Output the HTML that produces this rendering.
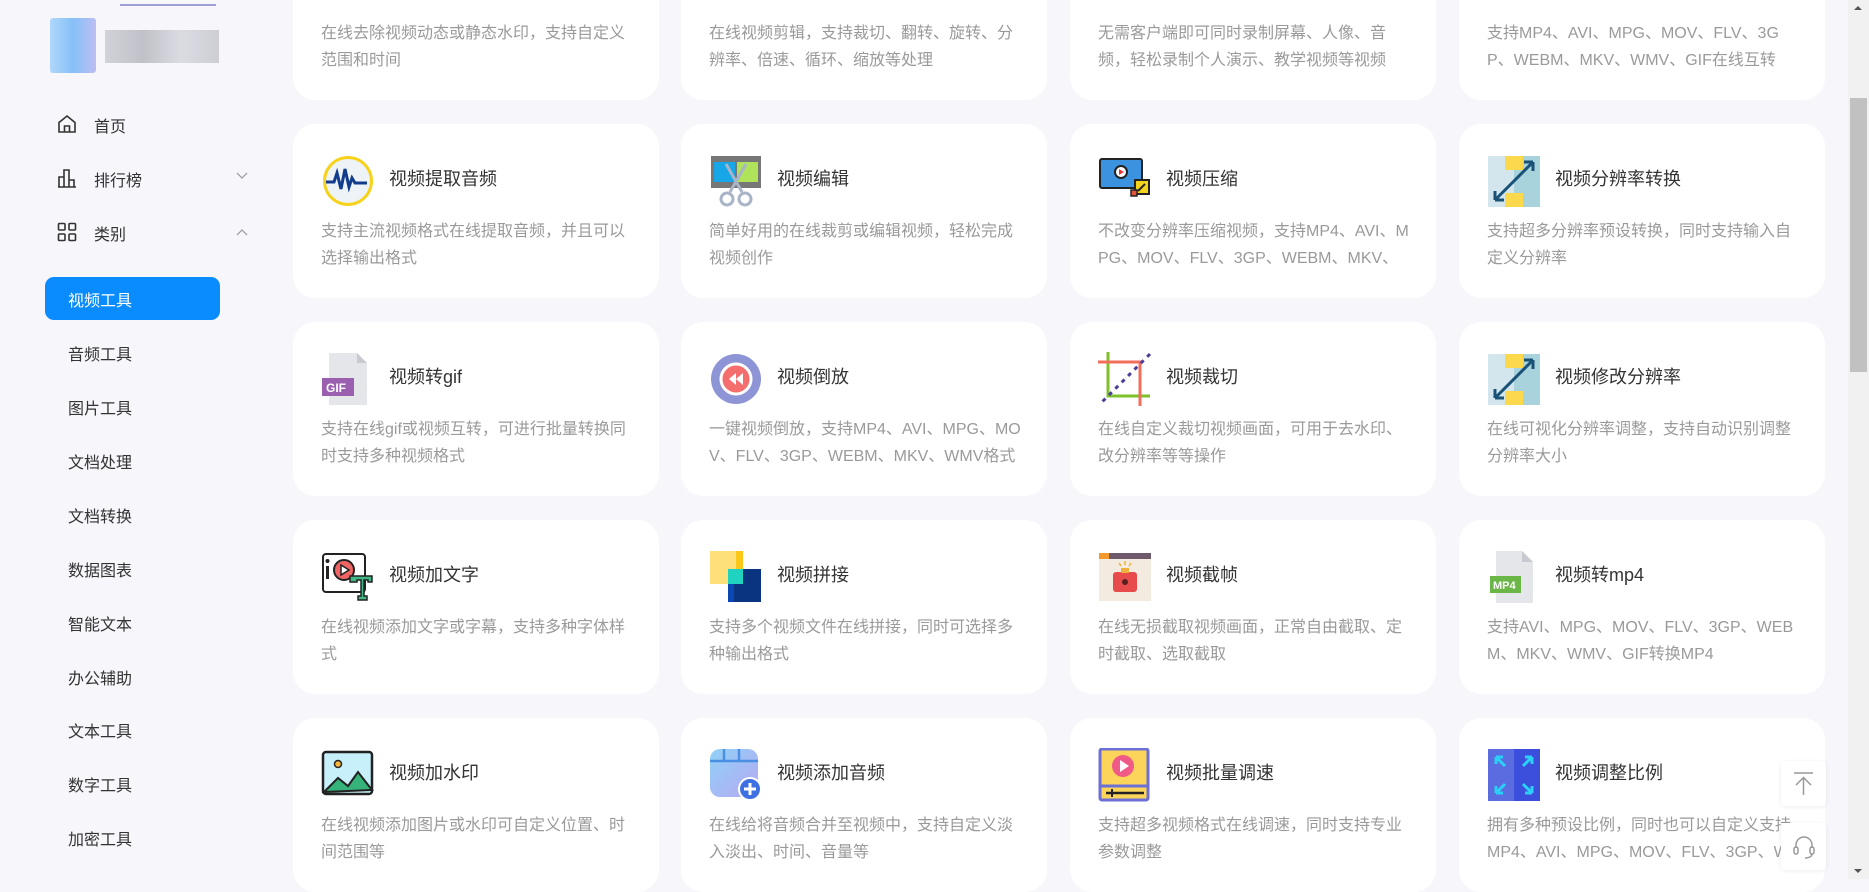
<!DOCTYPE html>
<html><head><meta charset="utf-8"><style>
*{margin:0;padding:0;box-sizing:border-box}
body{width:1869px;height:879px;overflow:hidden;background:#f6f6fb;font-family:"Liberation Sans","Noto Sans CJK SC",sans-serif;position:relative}
.card{position:absolute;width:366px;height:174px;background:#fff;border-radius:22px}
.card .ic{position:absolute;left:28px;top:30px;width:54px;height:54px}
.card .t{position:absolute;left:96px;top:41px;font-size:18px;color:#333;white-space:nowrap}
.card .d{position:absolute;left:28px;top:94px;font-size:16px;line-height:27px;color:#9a9a9a;white-space:nowrap}
.nav{position:absolute;font-size:16px;color:#333;white-space:nowrap}
.sub{position:absolute;left:68px;font-size:16px;color:#333}
</style></head><body>
<!-- logo -->
<div style="position:absolute;left:120px;top:4px;width:96px;height:2px;background:#9da0d0"></div>
<div style="position:absolute;left:50px;top:18px;width:46px;height:55px;background:linear-gradient(90deg,#9fd0fb,#6ab3f7 50%,#aeb0ef);opacity:.8;border-radius:3px"></div>
<div style="position:absolute;left:105px;top:30px;width:114px;height:33px;background:linear-gradient(90deg,#c9c9d1,#b3b3bb,#d4d4dc,#c3c3cb);opacity:.8"></div>
<!-- nav -->
<svg style="position:absolute;left:57px;top:114px" width="20" height="20" viewBox="0 0 20 20" fill="none" stroke="#333" stroke-width="1.6"><path d="M2 8.5L10 2l8 6.5V18H2z"/><path d="M7.5 18v-6h5v6"/></svg>
<div class="nav" style="left:94px;top:113px">首页</div>
<svg style="position:absolute;left:57px;top:168px" width="20" height="20" viewBox="0 0 20 20" fill="none" stroke="#333" stroke-width="1.6"><path d="M1 19h18M2 19V9h5v10M7 19V2h5v17M12 19v-7h5v7"/></svg>
<div class="nav" style="left:94px;top:167px">排行榜</div>
<svg style="position:absolute;left:236px;top:172px" width="12" height="8" viewBox="0 0 12 8" fill="none" stroke="#999" stroke-width="1.2"><path d="M1 1l5 5 5-5"/></svg>
<svg style="position:absolute;left:57px;top:222px" width="20" height="20" viewBox="0 0 20 20" fill="none" stroke="#333" stroke-width="1.6"><rect x="1.5" y="1.5" width="6.5" height="6.5" rx="1"/><rect x="12" y="1.5" width="6.5" height="6.5" rx="1"/><rect x="1.5" y="12" width="6.5" height="6.5" rx="1"/><rect x="12" y="12" width="6.5" height="6.5" rx="1"/></svg>
<div class="nav" style="left:94px;top:221px">类别</div>
<svg style="position:absolute;left:236px;top:228px" width="12" height="8" viewBox="0 0 12 8" fill="none" stroke="#999" stroke-width="1.2"><path d="M1 7l5-5 5 5"/></svg>
<div style="position:absolute;left:45px;top:277px;width:175px;height:43px;background:#0a8cff;border-radius:9px"></div>
<div class="sub" style="top:287px;color:#fff">视频工具</div>
<div class="sub" style="top:341px">音频工具</div>
<div class="sub" style="top:395px">图片工具</div>
<div class="sub" style="top:449px">文档处理</div>
<div class="sub" style="top:503px">文档转换</div>
<div class="sub" style="top:557px">数据图表</div>
<div class="sub" style="top:611px">智能文本</div>
<div class="sub" style="top:665px">办公辅助</div>
<div class="sub" style="top:718px">文本工具</div>
<div class="sub" style="top:772px">数字工具</div>
<div class="sub" style="top:826px">加密工具</div>

<!-- row 0 -->
<div class="card" style="left:293px;top:-74px"><div class="d">在线去除视频动态或静态水印，支持自定义<br>范围和时间</div></div>
<div class="card" style="left:681px;top:-74px"><div class="d">在线视频剪辑，支持裁切、翻转、旋转、分<br>辨率、倍速、循环、缩放等处理</div></div>
<div class="card" style="left:1070px;top:-74px"><div class="d">无需客户端即可同时录制屏幕、人像、音<br>频，轻松录制个人演示、教学视频等视频</div></div>
<div class="card" style="left:1459px;top:-74px"><div class="d">支持MP4、AVI、MPG、MOV、FLV、3G<br>P、WEBM、MKV、WMV、GIF在线互转</div></div>

<!-- row 1 -->
<div class="card" style="left:293px;top:124px">
<svg class="ic" viewBox="0 0 54 54"><circle cx="27" cy="27" r="25" fill="#f7d21b"/><circle cx="27" cy="27" r="22" fill="#eef3f7"/><path d="M5 28h8l3-9 4 16 4-20 4 18 3-9 3 5h12" fill="none" stroke="#123c8c" stroke-width="3"/></svg>
<div class="t">视频提取音频</div><div class="d">支持主流视频格式在线提取音频，并且可以<br>选择输出格式</div></div>
<div class="card" style="left:681px;top:124px">
<svg class="ic" viewBox="0 0 54 54"><rect x="2" y="2" width="50" height="32" fill="#777"/><rect x="5" y="8" width="21" height="20" fill="#17a6e8"/><rect x="28" y="8" width="21" height="20" fill="#aee35a"/><path d="M17 10l16 28M37 10L21 38" stroke="#aab4c8" stroke-width="3"/><circle cx="18" cy="45" r="6" fill="none" stroke="#aab4c8" stroke-width="3"/><circle cx="36" cy="45" r="6" fill="none" stroke="#aab4c8" stroke-width="3"/></svg>
<div class="t">视频编辑</div><div class="d">简单好用的在线裁剪或编辑视频，轻松完成<br>视频创作</div></div>
<div class="card" style="left:1070px;top:124px">
<svg class="ic" viewBox="0 0 54 54"><rect x="2" y="5" width="42" height="29" rx="2" fill="#3b93e0" stroke="#222" stroke-width="2"/><circle cx="23" cy="18" r="6" fill="#fff" stroke="#222" stroke-width="2"/><path d="M21 15l5 3-5 3z" fill="#e33"/><rect x="37" y="26" width="14" height="14" fill="#f5d31b" stroke="#222" stroke-width="2"/><rect x="33" y="36" width="6" height="6" fill="#e5533a" stroke="#222" stroke-width="1.5"/><path d="M47 30l-7 7" stroke="#222" stroke-width="2"/></svg>
<div class="t">视频压缩</div><div class="d">不改变分辨率压缩视频，支持MP4、AVI、M<br>PG、MOV、FLV、3GP、WEBM、MKV、</div></div>
<div class="card" style="left:1459px;top:124px">
<svg class="ic" viewBox="0 0 54 54"><rect x="1" y="2" width="52" height="51" fill="#d3e6ee"/><rect x="27" y="2" width="26" height="51" fill="#a8d3dc"/><rect x="18" y="2" width="18" height="14" fill="#fcd84d"/><rect x="18" y="39" width="18" height="14" fill="#fcd84d"/><path d="M8 46L46 8M8 46v-9M8 46h9M46 8h-9M46 8v9" stroke="#1a5277" stroke-width="3" fill="none"/></svg>
<div class="t">视频分辨率转换</div><div class="d">支持超多分辨率预设转换，同时支持输入自<br>定义分辨率</div></div>

<!-- row 2 -->
<div class="card" style="left:293px;top:322px">
<svg class="ic" viewBox="0 0 54 54"><path d="M8 1h28l10 10v42H8z" fill="#e4e6ea"/><path d="M36 1v10h10z" fill="#c7cad0"/><rect x="1" y="26" width="32" height="18" fill="#9b5fb0"/><text x="5" y="40" font-size="12" fill="#fff" font-family="Liberation Sans" font-weight="bold">GIF</text></svg>
<div class="t">视频转gif</div><div class="d">支持在线gif或视频互转，可进行批量转换同<br>时支持多种视频格式</div></div>
<div class="card" style="left:681px;top:322px">
<svg class="ic" viewBox="0 0 54 54"><circle cx="27" cy="27" r="25" fill="#8e95d6"/><circle cx="27" cy="27" r="15" fill="#f46e6e" stroke="#fff" stroke-width="3"/><path d="M27 21l-7 6 7 6zM34 21l-7 6 7 6z" fill="#fff"/></svg>
<div class="t">视频倒放</div><div class="d">一键视频倒放，支持MP4、AVI、MPG、MO<br>V、FLV、3GP、WEBM、MKV、WMV格式</div></div>
<div class="card" style="left:1070px;top:322px">
<svg class="ic" viewBox="0 0 54 54"><path d="M10 0v44h42" fill="none" stroke="#7ec22a" stroke-width="3"/><path d="M0 10h42v44" fill="none" stroke="#f26d5a" stroke-width="3"/><path d="M52 2L2 52" stroke="#4b3e9a" stroke-width="3" stroke-dasharray="4 5"/></svg>
<div class="t">视频裁切</div><div class="d">在线自定义裁切视频画面，可用于去水印、<br>改分辨率等等操作</div></div>
<div class="card" style="left:1459px;top:322px">
<svg class="ic" viewBox="0 0 54 54"><rect x="1" y="2" width="52" height="51" fill="#d3e6ee"/><rect x="27" y="2" width="26" height="51" fill="#a8d3dc"/><rect x="18" y="2" width="18" height="14" fill="#fcd84d"/><rect x="18" y="39" width="18" height="14" fill="#fcd84d"/><path d="M8 46L46 8M8 46v-9M8 46h9M46 8h-9M46 8v9" stroke="#1a5277" stroke-width="3" fill="none"/></svg>
<div class="t">视频修改分辨率</div><div class="d">在线可视化分辨率调整，支持自动识别调整<br>分辨率大小</div></div>

<!-- row 3 -->
<div class="card" style="left:293px;top:520px">
<svg class="ic" viewBox="0 0 54 54"><rect x="2" y="4" width="42" height="38" rx="3" fill="#fff" stroke="#222" stroke-width="2"/><rect x="5" y="16" width="3" height="13" fill="#222"/><circle cx="6.5" cy="11" r="2" fill="#222"/><circle cx="23" cy="20" r="10" fill="#f16464" stroke="#222" stroke-width="2"/><path d="M20 15l8 5-8 5z" fill="#fff" stroke="#222" stroke-width="1.5"/><path d="M29 26h22v6h-4v-2h-4v16h3v4H37v-4h3V30h-4v2h-7z" fill="#3fb884" stroke="#222" stroke-width="1.5"/></svg>
<div class="t">视频加文字</div><div class="d">在线视频添加文字或字幕，支持多种字体样<br>式</div></div>
<div class="card" style="left:681px;top:520px">
<svg class="ic" viewBox="0 0 54 54"><rect x="1" y="1" width="33" height="33" fill="#fde07a"/><rect x="27" y="1" width="7" height="33" fill="#fcc91a"/><rect x="19" y="19" width="33" height="33" fill="#0a3480"/><rect x="19" y="19" width="15" height="15" fill="#1fd3c0"/><rect x="19" y="34" width="6" height="18" fill="#0b46b5"/></svg>
<div class="t">视频拼接</div><div class="d">支持多个视频文件在线拼接，同时可选择多<br>种输出格式</div></div>
<div class="card" style="left:1070px;top:520px">
<svg class="ic" viewBox="0 0 54 54"><rect x="1" y="3" width="52" height="48" fill="#f3ebe0"/><rect x="1" y="3" width="52" height="6" fill="#6e5a6a"/><rect x="1" y="3" width="10" height="6" fill="#f49a2a"/><rect x="15" y="22" width="24" height="20" rx="3" fill="#e84b4b"/><rect x="23" y="18" width="8" height="5" fill="#f0b23a"/><circle cx="27" cy="32" r="3" fill="#5a2020"/><path d="M27 11v4M21 13l2 3M33 13l-2 3" stroke="#f0b23a" stroke-width="1.5"/></svg>
<div class="t">视频截帧</div><div class="d">在线无损截取视频画面，正常自由截取、定<br>时截取、选取截取</div></div>
<div class="card" style="left:1459px;top:520px">
<svg class="ic" viewBox="0 0 54 54"><path d="M9 1h26l11 11v41H9z" fill="#e4e6ea"/><path d="M35 1v11h11z" fill="#c7cad0"/><rect x="3" y="26" width="31" height="17" fill="#6ab748"/><text x="6" y="39" font-size="11" fill="#fff" font-family="Liberation Sans" font-weight="bold">MP4</text></svg>
<div class="t">视频转mp4</div><div class="d">支持AVI、MPG、MOV、FLV、3GP、WEB<br>M、MKV、WMV、GIF转换MP4</div></div>

<!-- row 4 -->
<div class="card" style="left:293px;top:718px">
<svg class="ic" viewBox="0 0 54 54"><rect x="2" y="4" width="49" height="42" rx="3" fill="#c8f0fb" stroke="#222" stroke-width="2.5"/><circle cx="17" cy="16" r="3.5" fill="#f7b63a" stroke="#222" stroke-width="1.5"/><path d="M3 44l14-14 10 8 10-14 14 18z" fill="#35b37a" stroke="#222" stroke-width="2"/></svg>
<div class="t">视频加水印</div><div class="d">在线视频添加图片或水印可自定义位置、时<br>间范围等</div></div>
<div class="card" style="left:681px;top:718px">
<svg class="ic" viewBox="0 0 54 54"><defs><linearGradient id="g1" x1="0" y1="0" x2="1" y2="1"><stop offset="0" stop-color="#8fd2f7"/><stop offset="1" stop-color="#b7a8f3"/></linearGradient></defs><rect x="1" y="1" width="48" height="48" rx="10" fill="url(#g1)"/><path d="M1 13h48M15 1v12M30 1v12" stroke="#4a90e2" stroke-width="2.5"/><circle cx="41" cy="41" r="11" fill="#3e6fe3" stroke="#fff" stroke-width="2"/><path d="M41 35v12M35 41h12" stroke="#fff" stroke-width="3"/></svg>
<div class="t">视频添加音频</div><div class="d">在线给将音频合并至视频中，支持自定义淡<br>入淡出、时间、音量等</div></div>
<div class="card" style="left:1070px;top:718px">
<svg class="ic" viewBox="0 0 54 54"><rect x="2" y="1" width="48" height="51" rx="2" fill="#fcd45a" stroke="#6b6fd6" stroke-width="3"/><path d="M2 38h48" stroke="#6b6fd6" stroke-width="3"/><circle cx="25" cy="18" r="11" fill="#f05a86"/><path d="M22 12l9 6-9 6z" fill="#fff"/><path d="M8 45h38" stroke="#222" stroke-width="2.5"/><path d="M14 41v8" stroke="#222" stroke-width="2"/></svg>
<div class="t">视频批量调速</div><div class="d">支持超多视频格式在线调速，同时支持专业<br>参数调整</div></div>
<div class="card" style="left:1459px;top:718px">
<svg class="ic" viewBox="0 0 54 54"><rect x="1" y="1" width="52" height="52" fill="#5b6be0"/><rect x="27" y="1" width="26" height="52" fill="#3b4fdc"/><path d="M9 9l9 9M9 9v7M9 9h7M45 9l-9 9M45 9v7M45 9h-7M9 45l9-9M9 45v-7M9 45h7M45 45l-9-9M45 45v-7M45 45h-7" stroke="#2ad0f5" stroke-width="3" fill="none"/></svg>
<div class="t">视频调整比例</div><div class="d">拥有多种预设比例，同时也可以自定义支持<br>MP4、AVI、MPG、MOV、FLV、3GP、WMV</div></div>

<!-- floating buttons -->
<div style="position:absolute;left:1781px;top:761px;width:45px;height:45px;background:#fff;border-radius:4px;box-shadow:0 1px 4px rgba(0,0,0,.08)"><svg style="position:absolute;left:12px;top:11px" width="21" height="24" viewBox="0 0 21 24" fill="none" stroke="#999" stroke-width="1.5"><path d="M1 1h19M10.5 23V6M3 13l7.5-7.5L18 13"/></svg></div>
<div style="position:absolute;left:1781px;top:823px;width:45px;height:47px;background:#fff;border-radius:4px;box-shadow:0 1px 4px rgba(0,0,0,.08)"><svg style="position:absolute;left:11px;top:11px" width="24" height="26" viewBox="0 0 24 26" fill="none" stroke="#999" stroke-width="1.5"><path d="M4 14V11a8 8 0 0116 0v3"/><rect x="2" y="13" width="4" height="7" rx="2"/><rect x="18" y="13" width="4" height="7" rx="2"/><path d="M20 20c0 3-4 4-7 4"/></svg></div>

<!-- scrollbar -->
<div style="position:absolute;left:1848px;top:0;width:21px;height:879px;background:#f1f1f1"></div>
<div style="position:absolute;left:1850px;top:98px;width:17px;height:274px;background:#c1c1c1"></div>
<div style="position:absolute;left:1854px;top:6px;width:0;height:0;border-left:4px solid transparent;border-right:4px solid transparent;border-bottom:4px solid #555"></div>
<div style="position:absolute;left:1854px;top:869px;width:0;height:0;border-left:4px solid transparent;border-right:4px solid transparent;border-top:4px solid #555"></div>
</body></html>
